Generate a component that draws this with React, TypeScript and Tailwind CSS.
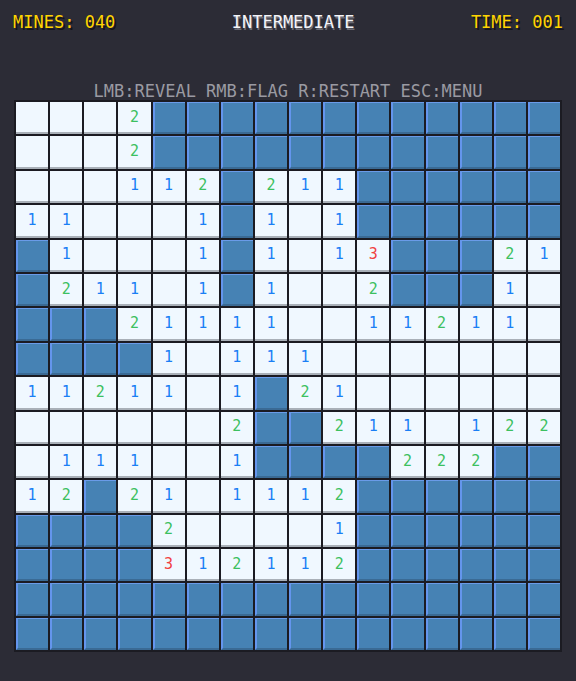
const BOARD = [
  "...2hhhhhhhhhhhh",
  "...2hhhhhhhhhhhh",
  "...112h211hhhhhh",
  "11...1h1.1hhhhhh",
  "h1...1h1.13hhh21",
  "h211.1h1..2hhh1.",
  "hhh21111..11211.",
  "hhhh1.111.......",
  "11211.1h21......",
  "......2hh211.122",
  ".111..1hhhh222hh",
  "12h21.1112hhhhhh",
  "hhhh2....1hhhhhh",
  "hhhh312112hhhhhh",
  "hhhhhhhhhhhhhhhh",
  "hhhhhhhhhhhhhhhh",
]

const numColor: Record<string, string> = {
  "1": "text-[#1a7ff5]",
  "2": "text-[#3cc060]",
  "3": "text-[#f04040]",
}

function Cell({ v }: { v: string }) {
  if (v === "h") {
    return (
      <div className="h-[32.4px] bg-[#4682b4] border-t-[1px] border-l-2 border-t-[#6a9be8] border-l-[#6495ed] border-b-2 border-b-[#3a6a94]" />
    )
  }
  return (
    <div className="h-[32.4px] bg-[#f0f8ff] border-b-2 border-b-[#a9b0b8] flex items-center justify-center">
      {v !== "." && (
        <span className={`text-[15px] leading-none ${numColor[v]}`}>{v}</span>
      )}
    </div>
  )
}

export default function App() {
  return (
    <div
      className="w-[576px] h-[681px] bg-[#2c2c36] overflow-hidden"
      style={{ fontFamily: '"DejaVu Sans Mono", "Liberation Mono", monospace' }}
    >
      <div className="h-[44px] px-[13px] flex items-center justify-between text-[17px] leading-none">
        <span className="text-[#ffd400] [text-shadow:2px_2px_0_#15151b]">MINES: 040</span>
        <span className="text-[#f4f4f8] [text-shadow:1px_2px_0_#6a6a74]">INTERMEDIATE</span>
        <span className="text-[#ffd400] [text-shadow:2px_2px_0_#15151b]">TIME: 001</span>
      </div>
      <div className="mt-[38px] h-[18px] text-center text-[17px] leading-[18px] text-[#9a9aa2]">
        LMB:REVEAL RMB:FLAG R:RESTART ESC:MENU
      </div>
      <div className="mx-[14px] bg-[#1b1b22] p-[2px] grid grid-cols-16 gap-[2px]">
        {BOARD.map((row, r) =>
          row.split("").map((v, c) => <Cell key={`${r}-${c}`} v={v} />)
        )}
      </div>
    </div>
  )
}
